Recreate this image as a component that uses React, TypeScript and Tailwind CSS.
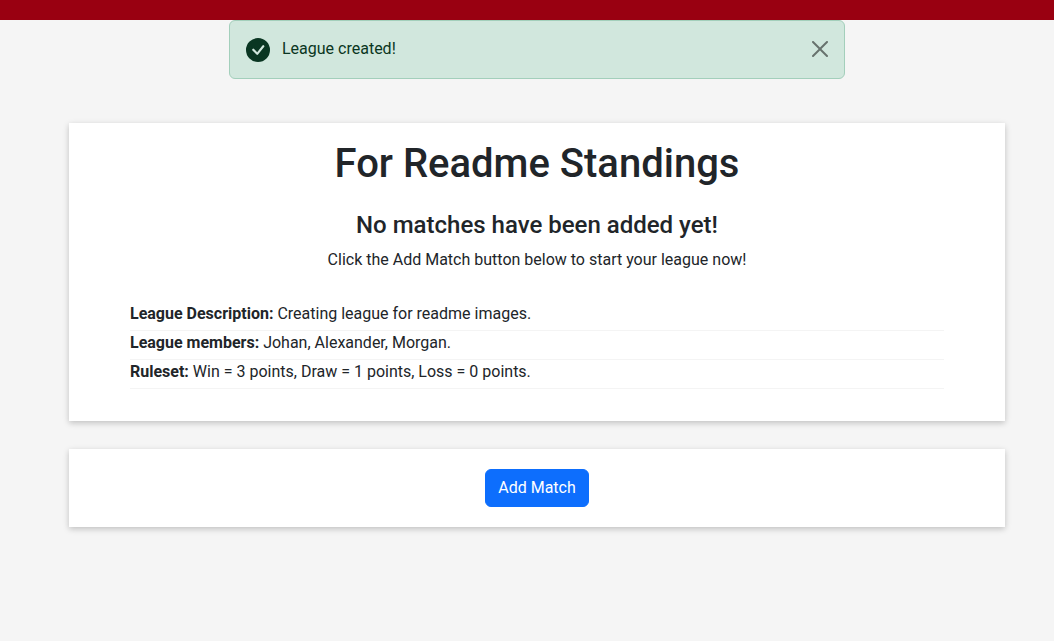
const details = [
  { label: "League Description:", value: "Creating league for readme images." },
  { label: "League members:", value: "Johan, Alexander, Morgan." },
  { label: "Ruleset:", value: "Win = 3 points, Draw = 1 points, Loss = 0 points." },
];

const card = "bg-white shadow-[0_2px_6px_0_rgba(0,0,0,0.22)]";

function SuccessAlert() {
  return (
    <div
      role="alert"
      className="mx-auto flex max-w-[616px] items-start rounded-md border border-[#a3cfbb] bg-[#d1e7dd] p-4 text-[#0a3622]"
    >
      <svg className="mt-px mr-3 size-6 shrink-0" viewBox="0 0 16 16" fill="currentColor" aria-hidden="true">
        <path d="M16 8A8 8 0 1 1 0 8a8 8 0 0 1 16 0zm-3.97-3.03a.75.75 0 0 0-1.08.022L7.477 9.417 5.384 7.323a.75.75 0 0 0-1.06 1.06L6.97 11.03a.75.75 0 0 0 1.079-.02l3.992-4.99a.75.75 0 0 0-.01-1.05z" />
      </svg>
      <span className="grow">League created!</span>
      <button type="button" aria-label="Close" className="mt-1 text-black opacity-50">
        <svg className="size-4" viewBox="0 0 16 16" fill="currentColor" aria-hidden="true">
          <path d="M.293.293a1 1 0 0 1 1.414 0L8 6.586 14.293.293a1 1 0 1 1 1.414 1.414L9.414 8l6.293 6.293a1 1 0 0 1-1.414 1.414L8 9.414l-6.293 6.293a1 1 0 0 1-1.414-1.414L6.586 8 .293 1.707a1 1 0 0 1 0-1.414z" />
        </svg>
      </button>
    </div>
  );
}

export default function App() {
  return (
    <div className="min-h-screen bg-[#f5f5f5] font-[Roboto,sans-serif] text-base text-[#212529]">
      <header className="h-5 bg-[#990011]" />
      <div className="pl-5">
        <SuccessAlert />
        <main className="mt-11 flex flex-col gap-7 px-[49px]">
          <section className={`${card} px-[61px] pt-[17px] pb-8 text-center`}>
            <h1 className="text-[40px] leading-12 font-medium">For Readme Standings</h1>
            <h2 className="mt-[23px] text-2xl leading-[29px] font-medium">No matches have been added yet!</h2>
            <p className="mt-2">Click the Add Match button below to start your league now!</p>
            <ul className="mt-[30px] text-left">
              {details.map((item) => (
                <li key={item.label} className="border-b border-[#f4f4f4] pb-1">
                  <strong className="font-bold">{item.label}</strong> {item.value}
                </li>
              ))}
            </ul>
          </section>
          <section className={`${card} flex justify-center py-5`}>
            <button
              type="button"
              className="rounded-md border border-[#0d6efd] bg-[#0d6efd] px-3 py-1.5 text-white"
            >
              Add Match
            </button>
          </section>
        </main>
      </div>
    </div>
  );
}
